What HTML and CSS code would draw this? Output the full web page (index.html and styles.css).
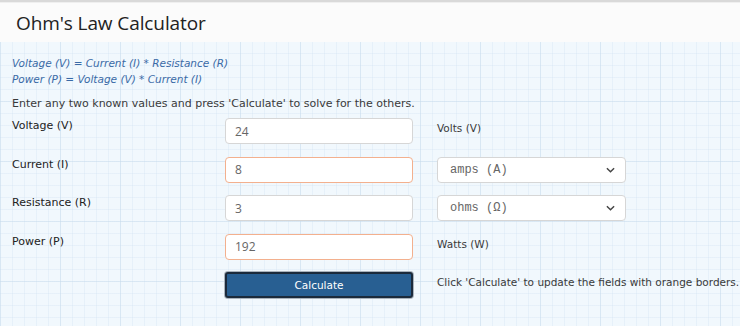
FILE: index.html
```html
<!DOCTYPE html>
<html lang="en">
<head>
<meta charset="utf-8">
<title>Ohm's Law Calculator</title>
<link rel="stylesheet" href="styles.css">
</head>
<body>
<header class="header">
  <h1 class="title">Ohm's Law Calculator</h1>
</header>
<main class="content">
  <div class="formulas">
    <div>Voltage (V) = Current (I) * Resistance (R)</div>
    <div>Power (P) = Voltage (V) * Current (I)</div>
  </div>
  <p class="intro">Enter any two known values and press 'Calculate' to solve for the others.</p>
  <div class="calc">
    <label class="label">Voltage (V)</label>
    <input class="field" type="text" value="24">
    <span class="unit">Volts (V)</span>

    <label class="label">Current (I)</label>
    <input class="field field-out" type="text" value="8">
    <div class="select-wrap">
      <select class="select"><option>amps (A)</option></select>
      <svg class="chev" viewBox="0 0 10 6" width="9" height="6"><path d="M1 1 L5 5 L9 1" fill="none" stroke="#444" stroke-width="1.6"/></svg>
    </div>

    <label class="label">Resistance (R)</label>
    <input class="field" type="text" value="3">
    <div class="select-wrap">
      <select class="select"><option>ohms (Ω)</option></select>
      <svg class="chev" viewBox="0 0 10 6" width="9" height="6"><path d="M1 1 L5 5 L9 1" fill="none" stroke="#444" stroke-width="1.6"/></svg>
    </div>

    <label class="label">Power (P)</label>
    <input class="field field-out" type="text" value="192">
    <span class="unit">Watts (W)</span>

    <span class="label"></span>
    <button class="btn" type="button">Calculate</button>
    <span class="unit note">Click 'Calculate' to update the fields with orange borders.</span>
  </div>
</main>
</body>
</html>
```

FILE: styles.css
```css
html, body {
  margin: 0;
  padding: 0;
}
body {
  width: 740px;
  height: 326px;
  overflow: hidden;
  font-family: "DejaVu Sans", "Liberation Sans", sans-serif;
  background-color: #f1f8fd;
  background-image:
    linear-gradient(to right, rgba(200, 220, 236, 0.45) 1px, transparent 1px),
    linear-gradient(to bottom, rgba(200, 220, 236, 0.45) 1px, transparent 1px),
    linear-gradient(to right, rgba(210, 228, 242, 0.35) 1px, transparent 1px),
    linear-gradient(to bottom, rgba(210, 228, 242, 0.35) 1px, transparent 1px);
  background-size: 60px 60px, 60px 60px, 12px 12px, 12px 12px;
  background-position: 0 41px;
  border-top: 2px solid #d9d9d9;
  box-sizing: border-box;
}
.header {
  background: #fbfbfb;
  height: 39px;
  border-top: 1px solid #efefef;
  display: flex;
  align-items: center;
  padding-left: 16px;
}
.title {
  margin: 0;
  font-family: "Open Sans", sans-serif;
  font-weight: 400;
  font-size: 19px;
  color: #222;
  letter-spacing: -0.1px;
}
.content {
  padding: 13px 12px 0 12px;
}
.formulas {
  color: #3a6aa6;
  font-style: italic;
  font-size: 10.5px;
  line-height: 16px;
}
.intro {
  margin: 9px 0 6px 0;
  font-size: 11px;
  line-height: 16px;
  color: #3a3a3a;
}
.calc {
  display: grid;
  grid-template-columns: 213px 212px 189px;
  grid-auto-rows: 26px;
  row-gap: 12.5px;
}
.label {
  font-size: 11px;
  line-height: 16px;
  color: #222;
}
.field {
  width: 188px;
  height: 26px;
  box-sizing: border-box;
  border: 1px solid #d6d6d6;
  border-radius: 4px;
  background: #fff;
  padding: 0 9px;
  font-family: "Open Sans", sans-serif;
  font-size: 12px;
  color: #666;
  outline: none;
}
.field-out {
  border-color: #f3b08e;
}
.unit {
  font-size: 10.5px;
  line-height: 16px;
  color: #3a3a3a;
  padding-top: 2px;
}
.note {
  padding-top: 2px;
  white-space: nowrap;
}
.select-wrap {
  position: relative;
  width: 189px;
  height: 26px;
}
.select {
  appearance: none;
  -webkit-appearance: none;
  width: 189px;
  height: 26px;
  box-sizing: border-box;
  border: 1px solid #d6d6d6;
  border-radius: 4px;
  background: #fff;
  padding: 0 12px;
  font-family: "Liberation Mono", monospace;
  font-size: 12px;
  color: #666;
}
.chev {
  position: absolute;
  right: 11px;
  top: 10px;
  pointer-events: none;
}
.btn {
  width: 188px;
  height: 26px;
  box-sizing: border-box;
  background: #285f92;
  border: 2px solid #1b2a3b;
  border-radius: 3px;
  box-shadow: 0 0 0 1px #a9b2bb;
  color: #fff;
  font-family: "DejaVu Sans", sans-serif;
  font-size: 10.5px;
  padding: 0;
}
```
